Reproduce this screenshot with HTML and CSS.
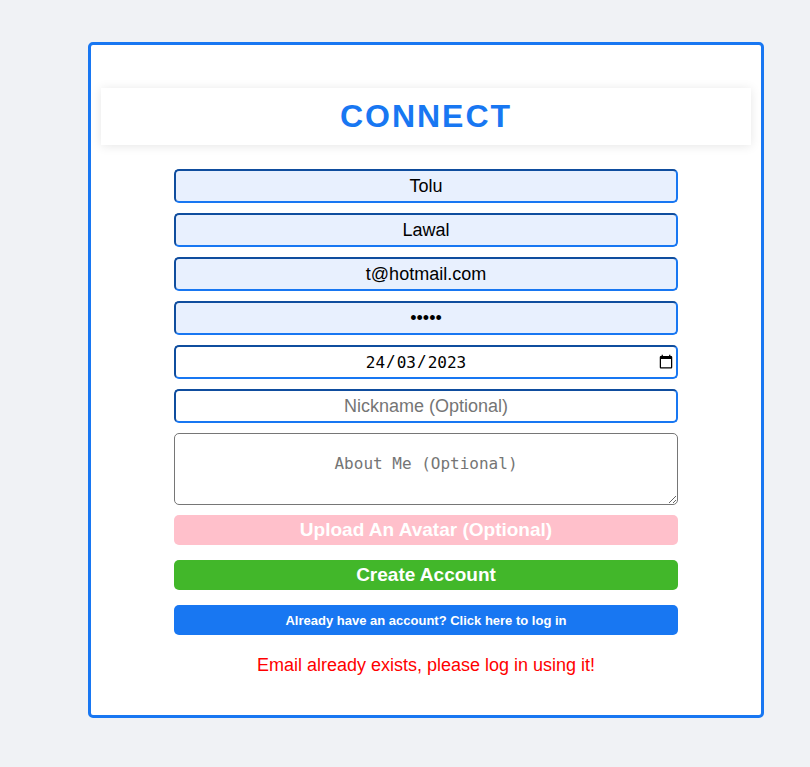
FILE: index.html
```html
<!DOCTYPE html>
<html lang="en-GB">
<head>
<meta charset="utf-8">
<title>Connect</title>
<link rel="stylesheet" href="styles.css">
</head>
<body>
<main class="card">
  <h1 class="brand">CONNECT</h1>
  <form class="signup">
    <input class="field filled" type="text" aria-label="First name" value="Tolu">
    <input class="field filled" type="text" aria-label="Surname" value="Lawal">
    <input class="field filled" type="email" aria-label="Email" value="t@hotmail.com">
    <input class="field filled" type="password" aria-label="Password" value="abcde">
    <input class="field date" type="date" aria-label="Date of birth" value="2023-03-24">
    <input class="field" type="text" aria-label="Nickname" placeholder="Nickname (Optional)">
    <textarea class="about" aria-label="About me" placeholder="About Me (Optional)"></textarea>
    <button class="btn upload" type="button">Upload An Avatar (Optional)</button>
    <button class="btn create" type="button">Create Account</button>
    <button class="btn login" type="button">Already have an account? Click here to log in</button>
  </form>
  <p class="error" role="alert">Email already exists, please log in using it!</p>
</main>
</body>
</html>
```
FILE: styles.css
```css
* {
  box-sizing: border-box;
}

body {
  margin: 0;
  padding: 42px 46px 49px 88px;
  background: #f0f2f5;
  font-family: "Liberation Sans", Arial, sans-serif;
}

.card {
  padding: 43px 10px 40px;
  border: 3px solid #1877f2;
  border-radius: 5px;
  background: #fff;
  text-align: center;
}

.brand {
  margin: 0 0 24px;
  padding: 10px;
  box-shadow: 0 1px 10px rgba(0, 0, 0, 0.1);
  color: #1877f2;
  font-size: 32px;
  line-height: 37px;
  letter-spacing: 2px;
}

.signup {
  display: flex;
  flex-direction: column;
  width: 504px;
  max-width: 100%;
  margin: 0 auto;
}

.field {
  width: 100%;
  height: 34px;
  margin: 0 0 10px;
  padding: 1px 2px;
  border: 2px inset #1877f2;
  border-radius: 5px;
  background: #fff;
  color: #000;
  font-family: inherit;
  font-size: 18px;
  text-align: center;
}

.filled {
  background: #e8f0fe;
}

.date {
  padding: 0;
  font-family: "DejaVu Sans Mono", monospace;
  font-size: 16px;
}

/* Day, month, year order in every locale; the slashes fill columns 2 and 4. */
.date::-webkit-datetime-edit-fields-wrapper {
  display: inline-grid;
  grid-template-columns: repeat(5, auto);
}

.date::-webkit-datetime-edit-text {
  grid-row: 1;
}

.date::-webkit-datetime-edit-day-field {
  grid-area: 1 / 1;
}

.date::-webkit-datetime-edit-month-field {
  grid-area: 1 / 3;
}

.date::-webkit-datetime-edit-year-field {
  grid-area: 1 / 5;
}

.about {
  height: 72px;
  margin: 0 0 10px;
  padding: 20px 2px;
  border: 1px solid #767676;
  border-radius: 5px;
  font-family: "DejaVu Sans Mono", monospace;
  font-size: 16px;
  text-align: center;
}

.field::placeholder,
.about::placeholder {
  color: #757575;
}

.btn {
  height: 30px;
  margin: 0 0 15px;
  padding: 0;
  border: 0;
  border-radius: 5px;
  color: #fff;
  font-family: inherit;
  font-size: 19px;
  font-weight: bold;
}

.upload {
  background: #ffc0cb;
}

.create {
  background: #42b72a;
}

.login {
  background: #1877f2;
  font-size: 13px;
}

.error {
  margin: 5px 0 0;
  color: #f00;
  font-size: 18px;
  line-height: 20px;
}
```
